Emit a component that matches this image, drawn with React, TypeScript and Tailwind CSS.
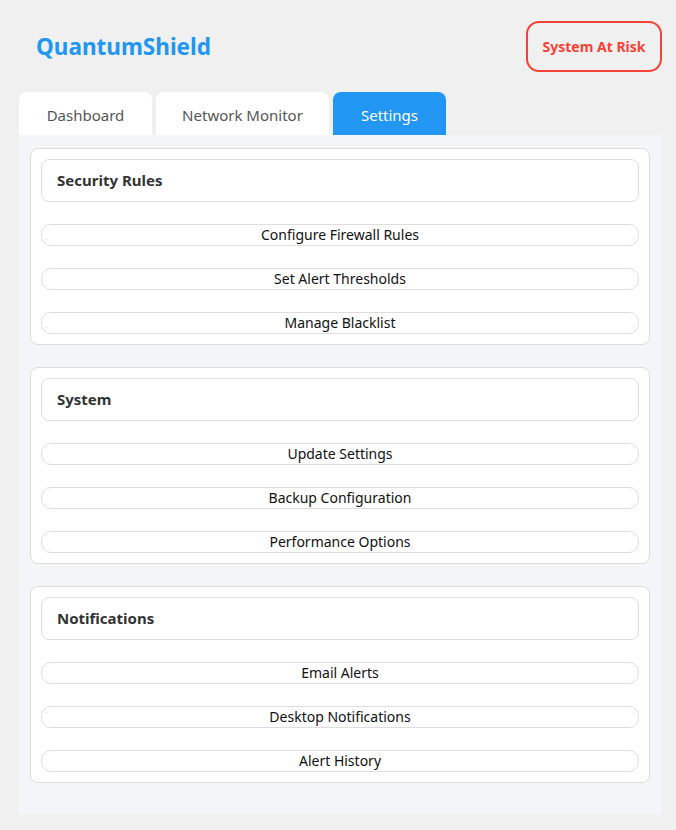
const sections = [
  {
    title: "Security Rules",
    items: ["Configure Firewall Rules", "Set Alert Thresholds", "Manage Blacklist"],
  },
  {
    title: "System",
    items: ["Update Settings", "Backup Configuration", "Performance Options"],
  },
  {
    title: "Notifications",
    items: ["Email Alerts", "Desktop Notifications", "Alert History"],
  },
];

const tabs = [
  { label: "Dashboard", width: "w-[133px]", active: false },
  { label: "Network Monitor", width: "w-[173px]", active: false },
  { label: "Settings", width: "w-[113px]", active: true },
];

export default function App() {
  return (
    <div className="min-h-[830px] w-[676px] bg-[#f0f0f0] font-['Noto_Sans','Open_Sans',sans-serif]">
      {/* Header */}
      <div className="flex items-center justify-between pl-[36px] pr-[14px] pt-[21px]">
        <h1 className="text-[22.5px] font-bold text-[#2196f3] leading-none mt-[2px]">QuantumShield</h1>
        <div className="h-[51px] w-[136px] flex items-center justify-center rounded-[13px] border-2 border-[#f44336] text-[14px] font-bold text-[#f44336]">
          System At Risk
        </div>
      </div>

      {/* Tabs */}
      <div className="mt-[20px] ml-[19px] flex gap-[4px]">
        {tabs.map((t) => (
          <div
            key={t.label}
            className={`${t.width} h-[43px] pt-[3px] flex items-center justify-center rounded-t-[8px] text-[15px] ${
              t.active ? "bg-[#2196f3] text-white" : "bg-white text-[#555]"
            }`}>
            {t.label}
          </div>
        ))}
      </div>

      {/* Panel */}
      <div className="mx-[19px] w-[642px] bg-[#f4f5f8] px-[11px] pt-[13px] pb-[31px] flex flex-col gap-[22.5px]">
        {sections.map((s) => (
          <div
            key={s.title}
            className="bg-white border border-[#dddddd] rounded-[8px] px-[10px] pt-[9.5px] pb-[10px] flex flex-col gap-[22px]">
            <div className="h-[43px] flex items-center border border-[#dddddd] rounded-[8px] px-[15px] text-[15px] font-bold text-[#333]">
              {s.title}
            </div>
            {s.items.map((it) => (
              <div
                key={it}
                className="h-[22px] flex items-center justify-center border border-[#dddddd] rounded-[10px] text-[14px] text-[#111]">
                {it}
              </div>
            ))}
          </div>
        ))}
      </div>
    </div>
  );
}
